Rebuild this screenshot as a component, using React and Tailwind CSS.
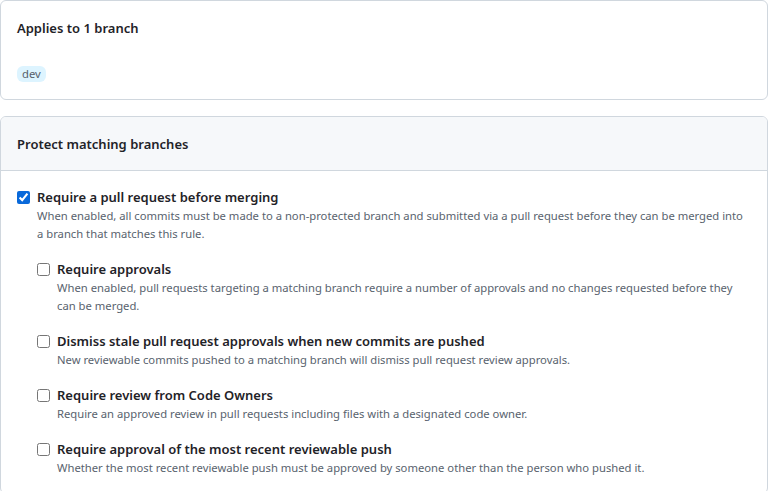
import React, { useState } from "react";

const font = { fontFamily: '"Noto Sans", "Liberation Sans", sans-serif' };

const rules = [
  {
    id: "approvals",
    title: "Require approvals",
    desc: "When enabled, pull requests targeting a matching branch require a number of approvals and no changes requested before they can be merged.",
  },
  {
    id: "dismiss",
    title: "Dismiss stale pull request approvals when new commits are pushed",
    desc: "New reviewable commits pushed to a matching branch will dismiss pull request review approvals.",
  },
  {
    id: "owners",
    title: "Require review from Code Owners",
    desc: "Require an approved review in pull requests including files with a designated code owner.",
  },
  {
    id: "recent",
    title: "Require approval of the most recent reviewable push",
    desc: "Whether the most recent reviewable push must be approved by someone other than the person who pushed it.",
  },
];

function CheckRow({ title, desc, checked, onChange, children }) {
  return (
    <div>
      <label className="flex items-start gap-[7px] cursor-pointer">
        <input
          type="checkbox"
          checked={checked}
          onChange={onChange}
          className="m-0 mt-[4px] h-[13px] w-[13px] shrink-0 accent-[#0969da]"
        />
        <span className="text-[13px] leading-[20px] font-semibold text-[#1f2328]">
          {title}
        </span>
      </label>
      <p className="pl-[20px] text-[11.25px] leading-[18px] text-[#59636e]">{desc}</p>
      {children}
    </div>
  );
}

export default function App() {
  const [checked, setChecked] = useState({ pr: true });
  const toggle = (id) => setChecked((c) => ({ ...c, [id]: !c[id] }));

  return (
    <div className="bg-white min-h-[491px] w-[768px] text-[#1f2328]" style={font}>
      {/* Applies to */}
      <div className="border border-[#d0d7de] rounded-md px-4 pt-[17px] pb-[17px]">
        <h3 className="text-[13px] leading-[21px] font-semibold">Applies to 1 branch</h3>
        <div className="mt-[27px] flex">
          <span className="rounded-md bg-[#ddf4ff] px-[5px] text-[11.25px] leading-[16px] text-[#57606a]">
            dev
          </span>
        </div>
      </div>

      {/* Protect matching branches */}
      <div className="mt-4 border border-[#d0d7de] rounded-md overflow-hidden">
        <div className="bg-[#f6f8fa] border-b border-[#d0d7de] px-4 pt-[17px] pb-[15px]">
          <h3 className="text-[13px] leading-[21px] font-semibold">Protect matching branches</h3>
        </div>
        <div className="px-4 pt-4 pb-4">
          <CheckRow
            title="Require a pull request before merging"
            desc="When enabled, all commits must be made to a non-protected branch and submitted via a pull request before they can be merged into a branch that matches this rule."
            checked={!!checked.pr}
            onChange={() => toggle("pr")}
          >
            <div className="pl-5 mt-4 flex flex-col gap-4">
              {rules.map((r) => (
                <CheckRow
                  key={r.id}
                  title={r.title}
                  desc={r.desc}
                  checked={!!checked[r.id]}
                  onChange={() => toggle(r.id)}
                />
              ))}
            </div>
          </CheckRow>
        </div>
      </div>
    </div>
  );
}
